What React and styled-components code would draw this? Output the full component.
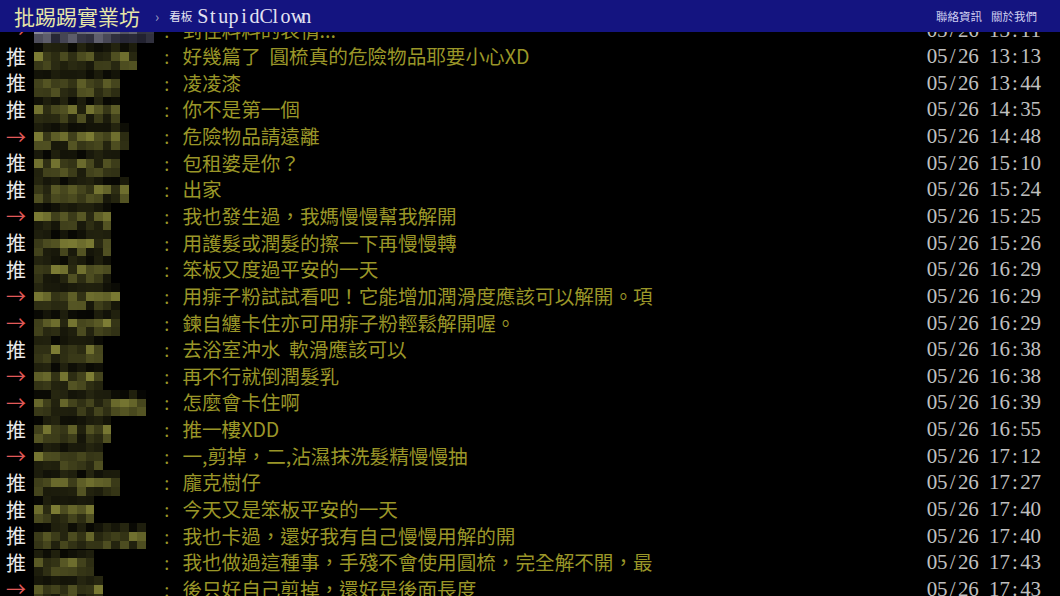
import React, { useMemo } from "react"
import styled, { createGlobalStyle } from "styled-components"

const GlobalStyle = createGlobalStyle`
  html, body {
    margin: 0;
    padding: 0;
    background: #000;
    overflow: hidden;
  }
  body {
    font-family: "Noto Sans CJK TC", "Noto Sans", sans-serif;
  }
`

const rows = [
  { tag: "→", user: 14, tone: "grey", text: "到住料料的表情...", time: "13:11" },
  { tag: "推", user: 12, text: "好幾篇了  圓梳真的危險物品耶要小心XD", time: "13:13" },
  { tag: "推", user: 10, text: "凌凌漆", time: "13:44" },
  { tag: "推", user: 10, text: "你不是第一個", time: "14:35" },
  { tag: "→", user: 11, text: "危險物品請遠離", time: "14:48" },
  { tag: "推", user: 10, text: "包租婆是你？", time: "15:10" },
  { tag: "推", user: 11, text: "出家", time: "15:24" },
  { tag: "→", user: 9, text: "我也發生過，我媽慢慢幫我解開", time: "15:25" },
  { tag: "推", user: 9, text: "用護髮或潤髮的擦一下再慢慢轉", time: "15:26" },
  { tag: "推", user: 9, text: "笨板又度過平安的一天", time: "16:29" },
  { tag: "→", user: 10, text: "用痱子粉試試看吧！它能增加潤滑度應該可以解開。項", time: "16:29" },
  { tag: "→", user: 10, text: "鍊自纏卡住亦可用痱子粉輕鬆解開喔。", time: "16:29" },
  { tag: "推", user: 8, text: "去浴室沖水  軟滑應該可以", time: "16:38" },
  { tag: "→", user: 8, text: "再不行就倒潤髮乳", time: "16:38" },
  { tag: "→", user: 13, text: "怎麼會卡住啊", time: "16:39" },
  { tag: "推", user: 9, text: "推一樓XDD", time: "16:55" },
  { tag: "→", user: 8, text: "一,剪掉，二,沾濕抹洗髮精慢慢抽", time: "17:12" },
  { tag: "推", user: 10, text: "龐克樹仔", time: "17:27" },
  { tag: "推", user: 7, text: "今天又是笨板平安的一天", time: "17:40" },
  { tag: "推", user: 13, text: "我也卡過，還好我有自己慢慢用解的開", time: "17:40" },
  { tag: "推", user: 7, text: "我也做過這種事，手殘不會使用圓梳，完全解不開，最", time: "17:43" },
  { tag: "→", user: 8, text: "後只好自己剪掉，還好是後面長度", time: "17:43" },
]

// small seeded random so the blurred ids look the same every load
const rng = (seed) => () => {
  seed = (seed + 0x6d2b79f5) | 0
  let t = Math.imul(seed ^ (seed >>> 15), 1 | seed)
  t = (t + Math.imul(t ^ (t >>> 7), 61 | t)) ^ t
  return ((t ^ (t >>> 14)) >>> 0) / 4294967296
}

const Mosaic = ({ cols, seed, tone }) => {
  const tiles = useMemo(() => {
    const rand = rng(seed * 97 + 13)
    const out = []
    for (let r = 0; r < 3; r++) {
      for (let c = 0; c < cols; c++) {
        const lo = r === 0 ? 5 : r === 1 ? 32 : 20
        const hi = r === 0 ? 38 : r === 1 ? 125 : 85
        const k = Math.round(lo + rand() * (hi - lo))
        const bg =
          tone === "grey"
            ? `rgb(${k + 12},${k + 12},${k + 26})`
            : `rgb(${k},${k},${Math.round(k * 0.42)})`
        out.push(bg)
      }
    }
    return out
  }, [cols, seed, tone])

  return (
    <MosaicGrid $cols={cols}>
      {tiles.map((bg, i) => (
        <span key={i} style={{ background: bg }} />
      ))}
    </MosaicGrid>
  )
}

const Mono = ({ text, className }) => (
  <MonoText className={className}>
    {text.split("").map((ch, i) => (
      <span key={i}>{ch === " " ? "\u00a0" : ch}</span>
    ))}
  </MonoText>
)

const App = () => (
  <Page>
    <GlobalStyle />
    <TopBar>
      <Logo>批踢踢實業坊</Logo>
      <Crumb>›</Crumb>
      <BoardLabel>看板</BoardLabel>
      <BoardName text="StupidClown" />
      <Links>
        <a>聯絡資訊</a>
        <a>關於我們</a>
      </Links>
    </TopBar>
    <PushList>
      {rows.map((row, i) => (
        <Push key={i}>
          <Tag $arrow={row.tag === "→"}>{row.tag}</Tag>
          <Mosaic cols={row.user} seed={i + 1} tone={row.tone} />
          <Content>
            <Colon>:</Colon>
            {row.text}
          </Content>
          <Time text={`05/26 ${row.time}`} />
        </Push>
      ))}
    </PushList>
  </Page>
)

export default App

const Page = styled.div`
  width: 1060px;
  height: 596px;
  overflow: hidden;
  background: #000;
  position: relative;
`

const TopBar = styled.header`
  position: fixed;
  top: 0;
  left: 0;
  right: 0;
  z-index: 2;
  height: 32px;
  background: #141480;
  display: flex;
  align-items: center;
  padding: 0 23px 0 14px;
  box-sizing: border-box;
`

const Logo = styled.a`
  font-size: 21px;
  line-height: 1;
  color: #e6e6a8;
  margin-top: 1px;
`

const Crumb = styled.span`
  font-size: 14px;
  color: #a4a4c8;
  margin: 0 10px 0 15px;
`

const BoardLabel = styled.span`
  font-size: 11.5px;
  color: #e4e4f0;
  margin-right: 5px;
`

const MonoText = styled.span`
  display: inline-flex;
  font-family: "Liberation Serif", "DejaVu Serif", serif;
  white-space: pre;
  span {
    display: inline-block;
    width: 10.4px;
    text-align: center;
  }
`

const BoardName = styled(Mono)`
  font-size: 20px;
  color: #e2e2f2;
`

const Links = styled.nav`
  margin-left: auto;
  display: flex;
  gap: 9px;
  a {
    font-size: 11.5px;
    color: #cfcff0;
  }
`

const PushList = styled.div`
  padding-top: 16.7px;
`

const Push = styled.div`
  display: grid;
  grid-template-columns: 34px 127.7px 1fr auto;
  align-items: center;
  height: 26.65px;
  padding-right: 19px;
`

const Tag = styled.span`
  padding-left: 6px;
  font-size: 20px;
  line-height: 1;
  color: ${(p) => (p.$arrow ? "#e25a5a" : "#eaeaea")};
`

const MosaicGrid = styled.div`
  display: grid;
  grid-template-columns: repeat(${(p) => p.$cols}, 8.6px);
  grid-template-rows: repeat(3, 1fr);
  height: 26.65px;
  align-self: stretch;
`

const Content = styled.span`
  font-size: 19.6px;
  line-height: 1;
  color: #9a9628;
  white-space: pre;
`

const Colon = styled.span`
  display: inline-block;
  width: 10px;
  margin-right: 10.7px;
  text-align: center;
  font-family: "Liberation Serif", serif;
  font-size: 20px;
`

const Time = styled(Mono)`
  font-size: 21px;
  color: #c0c0c0;
`
